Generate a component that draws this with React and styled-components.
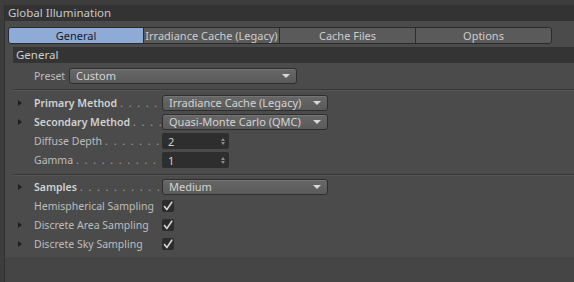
import React from 'react';
import styled, { createGlobalStyle } from 'styled-components';

const GlobalStyle = createGlobalStyle`
  html, body {
    margin: 0;
    padding: 0;
    background: #3d3d3d;
  }
  body {
    font-family: "Noto Sans", "Open Sans", sans-serif;
    font-size: 10.5px;
    color: #c8c8c8;
  }
`;

const Frame = styled.div`
  width: 574px;
  height: 282px;
  padding-top: 5px;
  box-sizing: border-box;
  overflow: hidden;
`;

const Panel = styled.div`
  margin-left: 4px;
  height: 277px;
  border-left: 1px solid #2f2f2f;
  background: #454545;
  display: flex;
  flex-direction: column;
`;

const TitleBar = styled.div`
  height: 16px;
  background: #333333;
  padding-left: 3px;
  font-size: 11.5px;
  line-height: 15px;
  color: #c9c9c9;
  white-space: nowrap;
`;

const Body = styled.div`
  background: #4b4b4b;
  padding: 6px 0 3px 0;
`;

const Tabs = styled.div`
  display: grid;
  grid-template-columns: 134px 136px 136px 1fr;
  margin-left: 3px;
  width: 544px;
  height: 17px;
  box-sizing: border-box;
  border: 1px solid #2a2a2a;
  border-radius: 3px;
  overflow: hidden;
`;

const Tab = styled.div`
  background: ${p => (p.$active ? '#8eabd8' : '#5a5a5a')};
  color: ${p => (p.$active ? '#1c1c1c' : '#cdcdcd')};
  border-left: ${p => (p.$first ? 'none' : '1px solid #2e2e2e')};
  text-align: center;
  font-size: 11px;
  line-height: 15px;
  white-space: nowrap;
`;

const SectionBar = styled.div`
  margin: 3px 0 0 8px;
  height: 16px;
  background: #343434;
  padding-left: 3px;
  font-size: 11.5px;
  line-height: 15px;
  color: #cfcfcf;
`;

const Group = styled.div`
  display: flex;
  flex-direction: column;
  gap: 3px;
  padding: ${p => p.$pad || '4px 0 5px 0'};
`;

const Separator = styled.div`
  margin-left: 8px;
  height: 0;
  border-top: 1px solid #363636;
  border-bottom: 1px solid #555555;
`;

const Row = styled.div`
  display: flex;
  align-items: center;
  height: 16px;
`;

const Arrow = styled.div`
  width: 29px;
  display: flex;
  justify-content: center;
  padding-left: 1px;
  box-sizing: border-box;
  &::before {
    content: '';
    display: ${p => (p.$show ? 'block' : 'none')};
    width: 0;
    height: 0;
    border-top: 3px solid transparent;
    border-bottom: 3px solid transparent;
    border-left: 4px solid #1f1f1f;
  }
`;

const Label = styled.div`
  width: ${p => p.$w || '128px'};
  display: flex;
  white-space: nowrap;
  overflow: hidden;
  color: ${p => (p.$bold ? '#d2d2d2' : '#bdbdbd')};
  font-weight: ${p => (p.$bold ? 600 : 400)};
  line-height: 16px;
`;

const Leader = styled.span`
  flex: 1;
  overflow: hidden;
  color: #a0a0a0;
  font-weight: 400;
  letter-spacing: 1.5px;
  padding-left: 3px;
`;

const Select = styled.div`
  width: ${p => p.$w}px;
  height: 16px;
  box-sizing: border-box;
  border: 1px solid #2e2e2e;
  border-radius: 3px;
  background: linear-gradient(#676767, #5a5a5a);
  box-shadow: inset 0 1px 0 #747474;
  display: flex;
  align-items: center;
  justify-content: space-between;
  padding: 0 6px 0 6px;
  color: #d4d4d4;
  font-size: 11px;
  line-height: 14px;
  white-space: nowrap;
  &::after {
    content: '';
    width: 0;
    height: 0;
    border-left: 4px solid transparent;
    border-right: 4px solid transparent;
    border-top: 4px solid #d8d8d8;
  }
`;

const NumberBox = styled.div`
  width: 67px;
  height: 16px;
  box-sizing: border-box;
  background: #2e2e2e;
  border-radius: 2px;
  display: flex;
  align-items: center;
  justify-content: space-between;
  padding: 0 4px 0 6px;
  color: #cfcfcf;
  font-size: 11px;
`;

const Spinner = styled.div`
  display: flex;
  flex-direction: column;
  gap: 1px;
  &::before, &::after {
    content: '';
    width: 0;
    height: 0;
    border-left: 2px solid transparent;
    border-right: 2px solid transparent;
  }
  &::before { border-bottom: 3px solid #8a8a8a; }
  &::after { border-top: 3px solid #8a8a8a; }
`;

const Check = styled.div`
  width: 12px;
  height: 12px;
  border-radius: 2px;
  background: #2c2c2c;
  display: flex;
  align-items: center;
  justify-content: center;
`;

const Footer = styled.div`
  flex: 1;
  background: #454545;
`;

const dots = '. . . . . . . . . . . . . . . . . . . . . . . . .';

const CheckMark = () => (
  <svg width="10" height="10" viewBox="0 0 10 10">
    <path d="M1.5 5.5 L3.8 8.6 L8.8 1.2" fill="none" stroke="#d8d8d8" strokeWidth="1.6" strokeLinecap="round" strokeLinejoin="round" />
  </svg>
);

const Field = ({ arrow, bold, label, leader = true, children }) => (
  <Row>
    <Arrow $show={arrow} />
    <Label $bold={bold}>
      {label}
      {leader && <Leader>{dots}</Leader>}
    </Label>
    {children}
  </Row>
);

export default function App() {
  const tabs = ['General', 'Irradiance Cache (Legacy)', 'Cache Files', 'Options'];
  return (
    <Frame>
      <GlobalStyle />
      <Panel>
        <TitleBar>Global Illumination</TitleBar>
        <Body>
          <Tabs>
            {tabs.map((t, i) => (
              <Tab key={t} $active={i === 0} $first={i === 0}>{t}</Tab>
            ))}
          </Tabs>
          <SectionBar>General</SectionBar>
          <Group $pad="5px 0 5px 0">
            <Row>
              <Arrow />
              <Label $w="35px">Preset</Label>
              <Select $w={228}>Custom</Select>
            </Row>
          </Group>
          <Separator />
          <Group $pad="4px 0 6px 0">
            <Field arrow bold label="Primary Method">
              <Select $w={166}>Irradiance Cache (Legacy)</Select>
            </Field>
            <Field arrow bold label="Secondary Method">
              <Select $w={166}>Quasi-Monte Carlo (QMC)</Select>
            </Field>
            <Field label="Diffuse Depth">
              <NumberBox>2<Spinner /></NumberBox>
            </Field>
            <Field label="Gamma">
              <NumberBox>1<Spinner /></NumberBox>
            </Field>
          </Group>
          <Separator />
          <Group $pad="3px 0 2px 0">
            <Field arrow bold label="Samples">
              <Select $w={166}>Medium</Select>
            </Field>
            <Field label="Hemispherical Sampling" leader={false}>
              <Check><CheckMark /></Check>
            </Field>
            <Field arrow label="Discrete Area Sampling" leader={false}>
              <Check><CheckMark /></Check>
            </Field>
            <Field arrow label="Discrete Sky Sampling" leader={false}>
              <Check><CheckMark /></Check>
            </Field>
          </Group>
        </Body>
        <Footer />
      </Panel>
    </Frame>
  );
}
